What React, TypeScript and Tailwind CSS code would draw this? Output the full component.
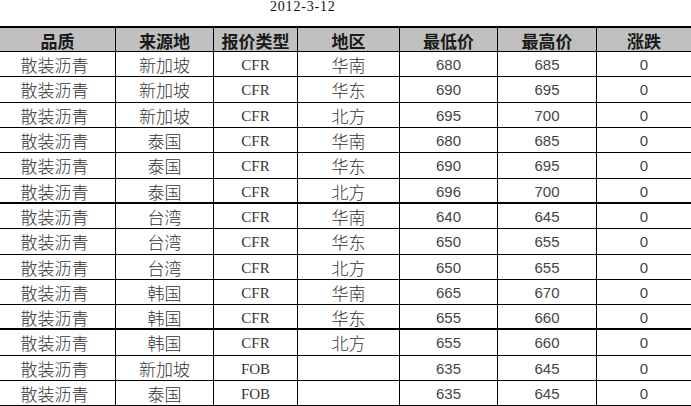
import React from "react";

type Row = {
  grade: string;
  origin: string;
  quote: string;
  region: string;
  low: string;
  high: string;
  change: string;
  thick?: boolean;
  h: string;
};

const rows: Row[] = [
  { grade: "散装沥青", origin: "新加坡", quote: "CFR", region: "华南", low: "680", high: "685", change: "0", h: "h-[25px]" },
  { grade: "散装沥青", origin: "新加坡", quote: "CFR", region: "华东", low: "690", high: "695", change: "0", h: "h-[26px]" },
  { grade: "散装沥青", origin: "新加坡", quote: "CFR", region: "北方", low: "695", high: "700", change: "0", h: "h-[25px]" },
  { grade: "散装沥青", origin: "泰国", quote: "CFR", region: "华南", low: "680", high: "685", change: "0", h: "h-[25px]" },
  { grade: "散装沥青", origin: "泰国", quote: "CFR", region: "华东", low: "690", high: "695", change: "0", h: "h-[26px]" },
  { grade: "散装沥青", origin: "泰国", quote: "CFR", region: "北方", low: "696", high: "700", change: "0", h: "h-[25px]", thick: true },
  { grade: "散装沥青", origin: "台湾", quote: "CFR", region: "华南", low: "640", high: "645", change: "0", h: "h-[25px]" },
  { grade: "散装沥青", origin: "台湾", quote: "CFR", region: "华东", low: "650", high: "655", change: "0", h: "h-[26px]" },
  { grade: "散装沥青", origin: "台湾", quote: "CFR", region: "北方", low: "650", high: "655", change: "0", h: "h-[25px]" },
  { grade: "散装沥青", origin: "韩国", quote: "CFR", region: "华南", low: "665", high: "670", change: "0", h: "h-[25px]" },
  { grade: "散装沥青", origin: "韩国", quote: "CFR", region: "华东", low: "655", high: "660", change: "0", h: "h-[25px]", thick: true },
  { grade: "散装沥青", origin: "韩国", quote: "CFR", region: "北方", low: "655", high: "660", change: "0", h: "h-[26px]" },
  { grade: "散装沥青", origin: "新加坡", quote: "FOB", region: "", low: "635", high: "645", change: "0", h: "h-[25px]" },
  { grade: "散装沥青", origin: "泰国", quote: "FOB", region: "", low: "635", high: "645", change: "0", h: "h-[25px]" },
];

const headers = ["品质", "来源地", "报价类型", "地区", "最低价", "最高价", "涨跌"];

const cols = "grid grid-cols-[116px_98px_84px_102px_98px_99px_94px]";
const cjk = { fontFamily: '"Noto Sans CJK SC", sans-serif' };

export default function App() {
  return (
    <div className="w-[691px] h-[406px] overflow-hidden bg-white">
      {/* date above the table */}
      <div className="h-[26px] flex pl-[270px]">
        <span className="text-[14px] leading-[14px] mt-[0px] text-[#111] font-['Liberation_Serif',serif] tracking-[0.8px]">
          2012-3-12
        </span>
      </div>

      <div className={`${cols} h-[26px] bg-[#c0c0c0] border-t-2 border-b border-black`}>
        {headers.map((h, i) => (
          <div
            key={h}
            style={cjk}
            className={`flex items-center justify-center text-[17px] font-bold text-[#1a1a1a] ${i < 6 ? "border-r border-black" : ""}`}
          >
            {h}
          </div>
        ))}
      </div>

      {rows.map((r, idx) => (
        <div
          key={idx}
          className={`${cols} ${r.h} border-black ${r.thick ? "border-b-2" : "border-b"}`}
        >
          <div style={cjk} className="flex items-center justify-center pr-[6px] text-[17px] font-light text-[#333] border-r border-black">
            {r.grade}
          </div>
          <div style={cjk} className="flex items-center justify-center text-[17px] font-light text-[#333] border-r border-black">
            {r.origin}
          </div>
          <div className="flex items-center justify-center text-[15px] text-[#333] font-['Liberation_Serif',serif] border-r border-black">
            {r.quote}
          </div>
          <div style={cjk} className="flex items-center justify-center text-[17px] font-light text-[#333] border-r border-black">
            {r.region}
          </div>
          <div className="flex items-center justify-center text-[15px] text-[#444] font-['Liberation_Sans',sans-serif] border-r border-black">
            {r.low}
          </div>
          <div className="flex items-center justify-center text-[15px] text-[#444] font-['Liberation_Sans',sans-serif] border-r border-black">
            {r.high}
          </div>
          <div className="flex items-center justify-center text-[15px] text-[#444] font-['Liberation_Sans',sans-serif]">
            {r.change}
          </div>
        </div>
      ))}
    </div>
  );
}
